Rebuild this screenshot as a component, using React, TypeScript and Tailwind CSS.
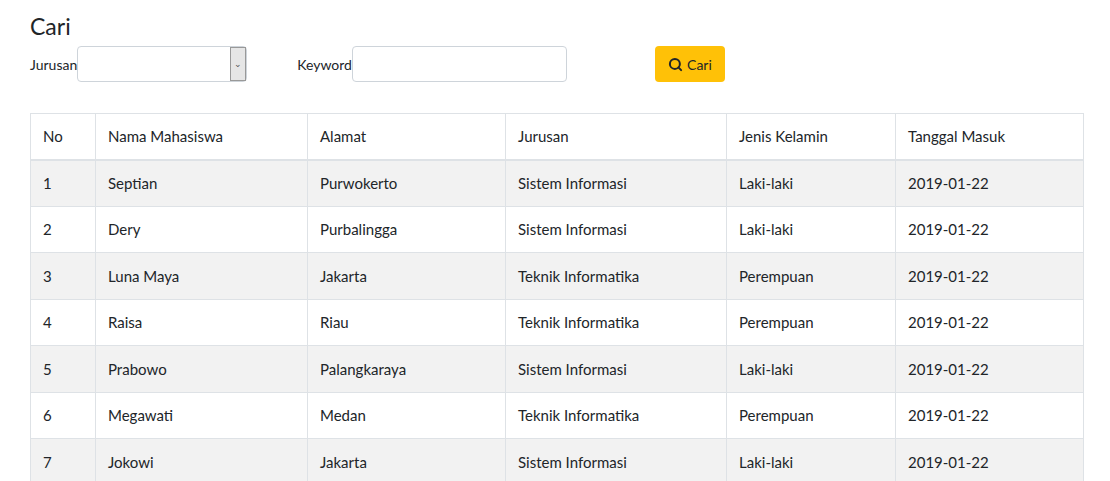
import { Search } from "lucide-react";

const rows = [
  ["1", "Septian", "Purwokerto", "Sistem Informasi", "Laki-laki", "2019-01-22"],
  ["2", "Dery", "Purbalingga", "Sistem Informasi", "Laki-laki", "2019-01-22"],
  ["3", "Luna Maya", "Jakarta", "Teknik Informatika", "Perempuan", "2019-01-22"],
  ["4", "Raisa", "Riau", "Teknik Informatika", "Perempuan", "2019-01-22"],
  ["5", "Prabowo", "Palangkaraya", "Sistem Informasi", "Laki-laki", "2019-01-22"],
  ["6", "Megawati", "Medan", "Teknik Informatika", "Perempuan", "2019-01-22"],
  ["7", "Jokowi", "Jakarta", "Sistem Informasi", "Laki-laki", "2019-01-22"],
];
const widths = ["w-[65px]", "w-[212px]", "w-[198px]", "w-[221px]", "w-[169px]", "w-[188px]"];
const heads = ["No", "Nama Mahasiswa", "Alamat", "Jurusan", "Jenis Kelamin", "Tanggal Masuk"];

export default function App() {
  return (
    <div className="h-[481px] overflow-hidden bg-white px-[30px] pt-[12px] text-[15px] text-[#212529]" style={{ fontFamily: "Lato, 'Noto Sans', sans-serif" }}>
      <h3 className="text-[23px] leading-[28px]">Cari</h3>
      <div className="mt-[6px] flex items-center">
        <span className="text-[14px]">Jurusan</span>
        <div className="flex h-[36px] w-[170px] items-stretch rounded border border-[#ced4da] bg-white">
          <div className="flex-1" />
          <div className="flex w-[16px] items-center justify-center border border-[#999] bg-[#e6e6e6] text-[9px] text-[#555]">⌄</div>
        </div>
        <span className="ml-[50px] text-[14px]">Keyword</span>
        <div className="h-[36px] w-[215px] rounded border border-[#ced4da] bg-white" />
        <button className="ml-[88px] flex h-[36px] w-[70px] items-center justify-center gap-1 rounded bg-[#ffc107] text-[14px]">
          <Search size={15} strokeWidth={3.2} />
          Cari
        </button>
      </div>
      <table className="mt-[31px] w-[1053px] table-fixed border-collapse">
        <thead>
          <tr className="h-[46px]">
            {heads.map((h, i) => (
              <th key={h} className={`${widths[i]} border border-b-2 border-[#dee2e6] px-3 text-left font-normal`}>{h}</th>
            ))}
          </tr>
        </thead>
        <tbody>
          {rows.map((r, ri) => (
            <tr key={ri} className={`h-[46.5px] ${ri % 2 === 0 ? "bg-[#f2f2f2]" : "bg-white"}`}>
              {r.map((c, ci) => (
                <td key={ci} className="border border-[#dee2e6] px-3">{c}</td>
              ))}
            </tr>
          ))}
        </tbody>
      </table>
    </div>
  );
}
